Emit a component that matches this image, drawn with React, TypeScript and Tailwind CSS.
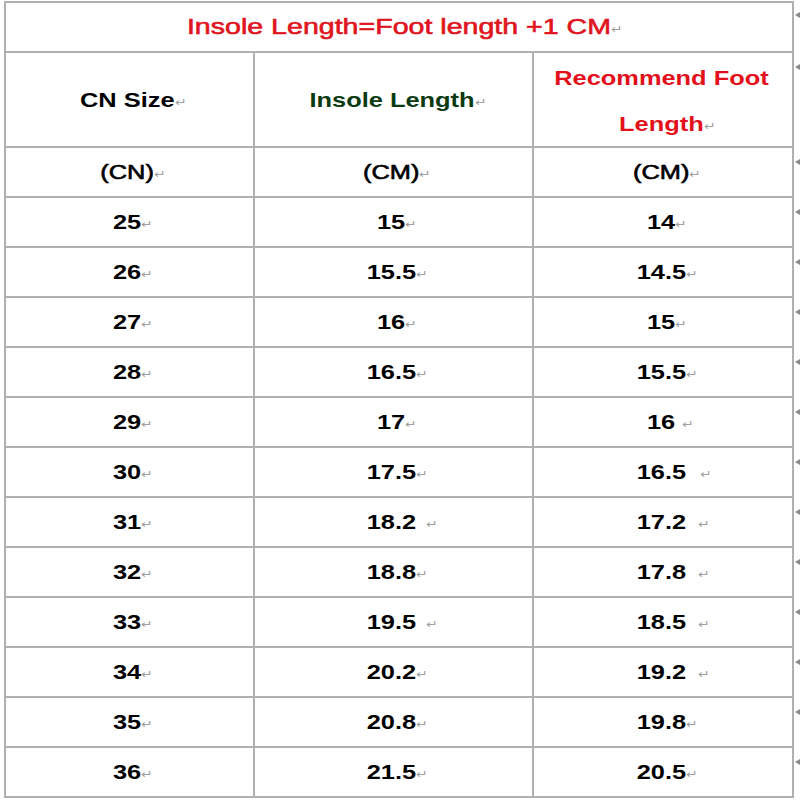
import React from 'react';

const rows: [string, string, string, number, number][] = [
  ['25', '15', '14', 0, 0],
  ['26', '15.5', '14.5', 0, 0],
  ['27', '16', '15', 0, 0],
  ['28', '16.5', '15.5', 0, 0],
  ['29', '17', '16', 0, 5],
  ['30', '17.5', '16.5', 0, 11],
  ['31', '18.2', '17.2', 8, 9],
  ['32', '18.8', '17.8', 0, 9],
  ['33', '19.5', '18.5', 8, 9],
  ['34', '20.2', '19.2', 0, 9],
  ['35', '20.8', '19.8', 0, 0],
  ['36', '21.5', '20.5', 0, 0],
];

// Word paragraph mark, hangs after the text so it doesn't shift the centring
const Ret = ({ gap = 0 }: { gap?: number }) => (
  <span
    className="absolute top-1/2 left-full -translate-y-[30%] text-[11px] leading-none font-normal text-[#a0a0a0] [-webkit-text-stroke:0px]"
    style={{ marginLeft: gap }}
  >
    ↵
  </span>
);

const Marker = () => (
  <div className="w-[8px] pl-[1px] pt-[11px]">
    <div className="h-0 w-0 border-y-[3px] border-r-[5px] border-y-transparent border-r-[#8a8a8a]" />
  </div>
);

const Cell = ({ w, children }: { w: string; children: React.ReactNode }) => (
  <div className={`${w} flex items-center justify-center border-r-2 border-b-2 border-[#b0b0b0]`}>
    {children}
  </div>
);

const Stretch = ({ children, className = '' }: { children: React.ReactNode; className?: string }) => (
  <span className={`relative mr-[4px] inline-block scale-x-[1.27] whitespace-pre ${className}`}>{children}</span>
);

export default function App() {
  return (
    <div className="h-[800px] w-[800px] bg-white pt-px pl-[4px] font-['Liberation_Sans',Arial,sans-serif] text-black">
      <div className="flex">
        <div className="w-[790px] border-t-2 border-l-2 border-[#b0b0b0]">
          {/* title */}
          <div className="flex h-[50px] items-center justify-center border-r-2 border-b-2 border-[#b0b0b0]">
            <Stretch className="ml-[4px] text-[22.5px] text-[#e0141e] [-webkit-text-stroke:0.6px_#e0141e]">
              Insole Length=Foot length +1 CM<Ret />
            </Stretch>
          </div>
          {/* header */}
          <div className="flex h-[95px]">
            <Cell w="w-[249px]">
              <Stretch className="text-[20px] font-bold">CN Size<Ret /></Stretch>
            </Cell>
            <Cell w="w-[279px]">
              <Stretch className="text-[20px] font-bold text-[#0c3a10]">Insole Length<Ret /></Stretch>
            </Cell>
            <Cell w="w-[260px]">
              <div className="pt-[3px] text-center text-[20px] font-bold leading-[46px] text-[#e3101b]">
                <Stretch>Recommend Foot</Stretch>
                <br />
                <Stretch>Length<Ret /></Stretch>
              </div>
            </Cell>
          </div>
          {/* units */}
          <div className="flex h-[50px] text-[20px] [-webkit-text-stroke:0.6px_#000]">
            <Cell w="w-[249px]"><Stretch>(CN)<Ret /></Stretch></Cell>
            <Cell w="w-[279px]"><Stretch>(CM)<Ret /></Stretch></Cell>
            <Cell w="w-[260px]"><Stretch>(CM)<Ret /></Stretch></Cell>
          </div>
          {rows.map(([cn, ins, foot, g2, g3]) => (
            <div key={cn} className="flex h-[50px] text-[20px] font-bold">
              <Cell w="w-[249px]"><Stretch>{cn}<Ret /></Stretch></Cell>
              <Cell w="w-[279px]"><Stretch>{ins}<Ret gap={g2} /></Stretch></Cell>
              <Cell w="w-[260px]"><Stretch>{foot}<Ret gap={g3} /></Stretch></Cell>
            </div>
          ))}
        </div>
        <div className="flex flex-col">
          <div className="h-[52px]"><Marker /></div>
          <div className="h-[95px]"><Marker /></div>
          <div className="h-[50px]"><Marker /></div>
          {rows.map(([cn]) => (
            <div key={cn} className="h-[50px]"><Marker /></div>
          ))}
        </div>
      </div>
    </div>
  );
}
